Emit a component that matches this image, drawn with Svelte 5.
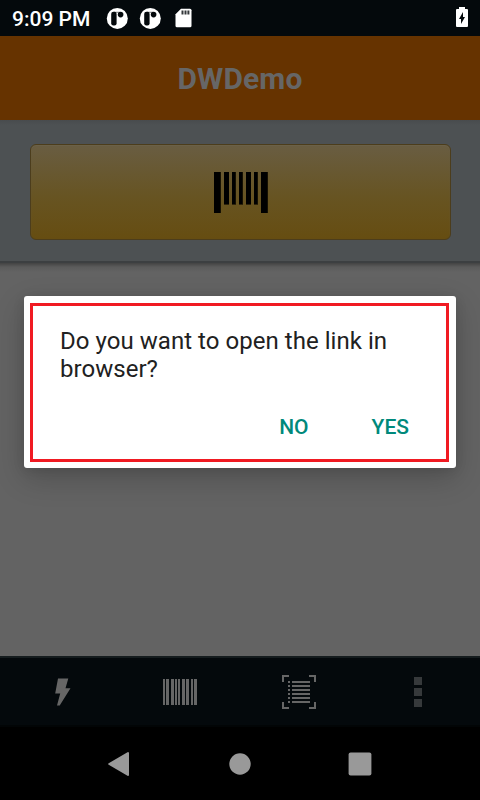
<script>
  const buttonBars = [[0, 7, 41], [10, 5, 32], [18, 4, 32], [25, 4, 32], [32, 5, 32], [40, 4, 32], [47, 7, 41]];
  const smallBars = [[0, 2], [3, 3], [8, 3], [12, 2], [15, 2], [19, 3], [23, 3], [28, 2], [31, 3]];
  const lines = [6, 10, 14, 18, 22, 26];
</script>

<div class="screen">
  <header class="status">
    <span class="time">9:09 PM</span>
    {#each [0, 1] as n (n)}
      <svg class="round" width="22" height="22" viewBox="0 0 22 22">
        <circle cx="11.3" cy="11.4" r="10.5" fill="#fff" />
        <rect x="5.2" y="4.8" width="5.4" height="13.6" rx="2.2" fill="#04090c" />
        <path d="M8 4.8h6v.9H8z" fill="#04090c" opacity=".6" />
        <circle cx="14.6" cy="7.6" r="2.8" fill="#04090c" />
      </svg>
    {/each}
    <svg class="card" width="17" height="20" viewBox="0 0 17 20">
      <path d="M6 .7H15Q16.5 .7 16.5 2.2V17.8Q16.5 19.3 15 19.3H2Q.5 19.3 .5 17.8V6.2Z" fill="#fff" />
      <path d="M6.5 2.5h2v4h-2zM9.5 2.5h2v4h-2zM12.4 2.5h2v4h-2z" fill="#34383a" />
    </svg>
    <svg class="battery" width="12" height="20" viewBox="0 0 12 20">
      <path d="M3 0H9V2H11Q12 2 12 3V19Q12 20 11 20H1Q0 20 0 19V3Q0 2 1 2H3Z" fill="#fff" />
      <path d="M7 5V10H9L5 17V12H3Z" fill="#04090c" />
    </svg>
  </header>
  <div class="title">DWDemo</div>
  <section class="panel">
    <div class="scan">
      <svg width="54" height="41" viewBox="0 0 54 41">
        {#each buttonBars as [x, w, h] (x)}
          <rect {x} y="0" width={w} height={h === 32 ? 32.7 : 41} fill="#161103" />
          <rect {x} y="0" width={w - (w === 5 ? 0 : 1)} height={h} fill="#000" />
        {/each}
      </svg>
    </div>
  </section>
  <main></main>
  <nav class="tools">
    <div class="tool">
      <svg class="bolt" width="16" height="28" viewBox="0 0 16 28"><path d="M3 0.5H13.3L10.5 10.2H15.5L4.7 27.5H2L5.2 15.5H0.2Z" fill="#666" /></svg>
    </div>
    <div class="tool">
      <svg width="34" height="26" viewBox="0 0 34 26" shape-rendering="crispEdges">
        {#each smallBars as [x, w] (x)}
          <rect {x} y="0" width={w} height="26" fill="#666" />
        {/each}
      </svg>
    </div>
    <div class="tool">
      <svg width="34" height="34" viewBox="0 0 34 34" shape-rendering="crispEdges">
        <path d="M0 7V0H7V2H2V7ZM27 0H34V7H32V2H27ZM0 27H2V32H7V34H0ZM32 27H34V34H27V32H32Z" fill="#666" />
        {#each lines as y (y)}
          <path d="M6 {y}h2v2h-2zM10 {y}h18v2h-18z" fill="#666" />
        {/each}
      </svg>
    </div>
    <div class="tool">
      <svg width="8" height="30" viewBox="0 0 8 30"><path d="M0 0h8v8H0zM0 11h8v8H0zM0 22h8v8H0z" fill="#36393b" /></svg>
    </div>
  </nav>
  <footer class="system">
    <svg width="24" height="26" viewBox="0 0 24 26"><path d="M1.2 13L20 2V24Z" fill="#999" stroke="#999" stroke-width="2" stroke-linejoin="round" /></svg>
    <svg width="24" height="26" viewBox="0 0 24 26"><circle cx="12" cy="13" r="10.7" fill="#999" /></svg>
    <svg width="24" height="26" viewBox="0 0 24 26"><rect x=".6" y="1.6" width="22.8" height="22.8" rx="2" fill="#999" /></svg>
  </footer>

  <div class="dialog" role="dialog" aria-label="Open link">
    <div class="frame">
      <p>Do you want to open the link in browser?</p>
      <div class="actions">
        <button>NO</button>
        <button>YES</button>
      </div>
    </div>
  </div>
</div>

<style>
  :global(body) { background: #000; }
  .screen {
    position: relative;
    display: flex;
    flex-direction: column;
    width: 480px;
    height: 800px;
    overflow: hidden;
    font-family: Roboto, sans-serif;
  }
  svg { display: block; flex: none; overflow: visible; }
  .status {
    display: flex;
    align-items: center;
    height: 36px;
    padding: 0 12px;
    box-sizing: border-box;
    background: #04090c;
    color: #fff;
  }
  .time { width: 94px; padding-top: 2px; font-size: 21px; font-weight: 500; line-height: 36px; white-space: nowrap; }
  .round { margin-right: 11px; }
  .card { margin-left: 3px; }
  .battery { margin-left: auto; margin-top: -2px; }
  .title {
    height: 84px;
    background: #630;
    color: #666;
    font-size: 30px;
    font-weight: 700;
    line-height: 85px;
    letter-spacing: .1px;
    text-align: center;
  }
  .panel {
    box-sizing: border-box;
    height: 143px;
    padding: 24px 29px 0 30px;
    background: linear-gradient(#484b4d, #4d5153 5px, #4d5153);
    border-bottom: 2px solid #3c3f41;
  }
  .scan {
    display: flex;
    justify-content: center;
    box-sizing: border-box;
    height: 96px;
    padding-top: 27px;
    border: 1px solid #4c3d1c;
    border-radius: 6px;
    background: linear-gradient(#695d42, #675422 55%, #664d11);
    box-shadow: inset 0 1px 1px #6c624a;
  }
  main { flex: 1; background: linear-gradient(#434343, #5b5b5b 4px, #636363 9px); }
  .tools {
    display: flex;
    box-sizing: border-box;
    height: 71px;
    border-top: 2px solid #151c1e;
    border-bottom: 2px solid #020506;
    background: #04090c;
  }
  .tool { display: flex; align-items: center; justify-content: center; padding-top: 1px; }
  .tool:first-child { width: 124px; }
  .tool:nth-child(2) { width: 112px; }
  .tool:nth-child(3) { width: 126px; }
  .tool:nth-child(4) { width: 112px; }
  .bolt { margin: -1px 0 0 1px; }
  .system { display: flex; align-items: center; justify-content: center; gap: 96px; height: 73px; background: #000; }
  .dialog {
    position: absolute;
    left: 24px;
    top: 296px;
    box-sizing: border-box;
    width: 432px;
    height: 172px;
    padding: 7px 7px 6px 6px;
    border-radius: 3px;
    background: #fff;
    box-shadow: 0 10px 30px rgba(0, 0, 0, .2), 0 2px 12px rgba(0, 0, 0, .1);
  }
  .frame { box-sizing: border-box; height: 159px; padding: 21px 17px 0 27px; border: 3px solid #f01a22; }
  p { margin: 0; color: #212121; font-size: 24px; line-height: 28px; letter-spacing: .04px; }
  .actions { display: flex; justify-content: flex-end; gap: 23px; margin-top: 20px; }
  button {
    margin: 0;
    padding: 12px 20px;
    border: 0;
    background: none;
    color: #00897b;
    font: 500 21px/24px Roboto, sans-serif;
  }
</style>
